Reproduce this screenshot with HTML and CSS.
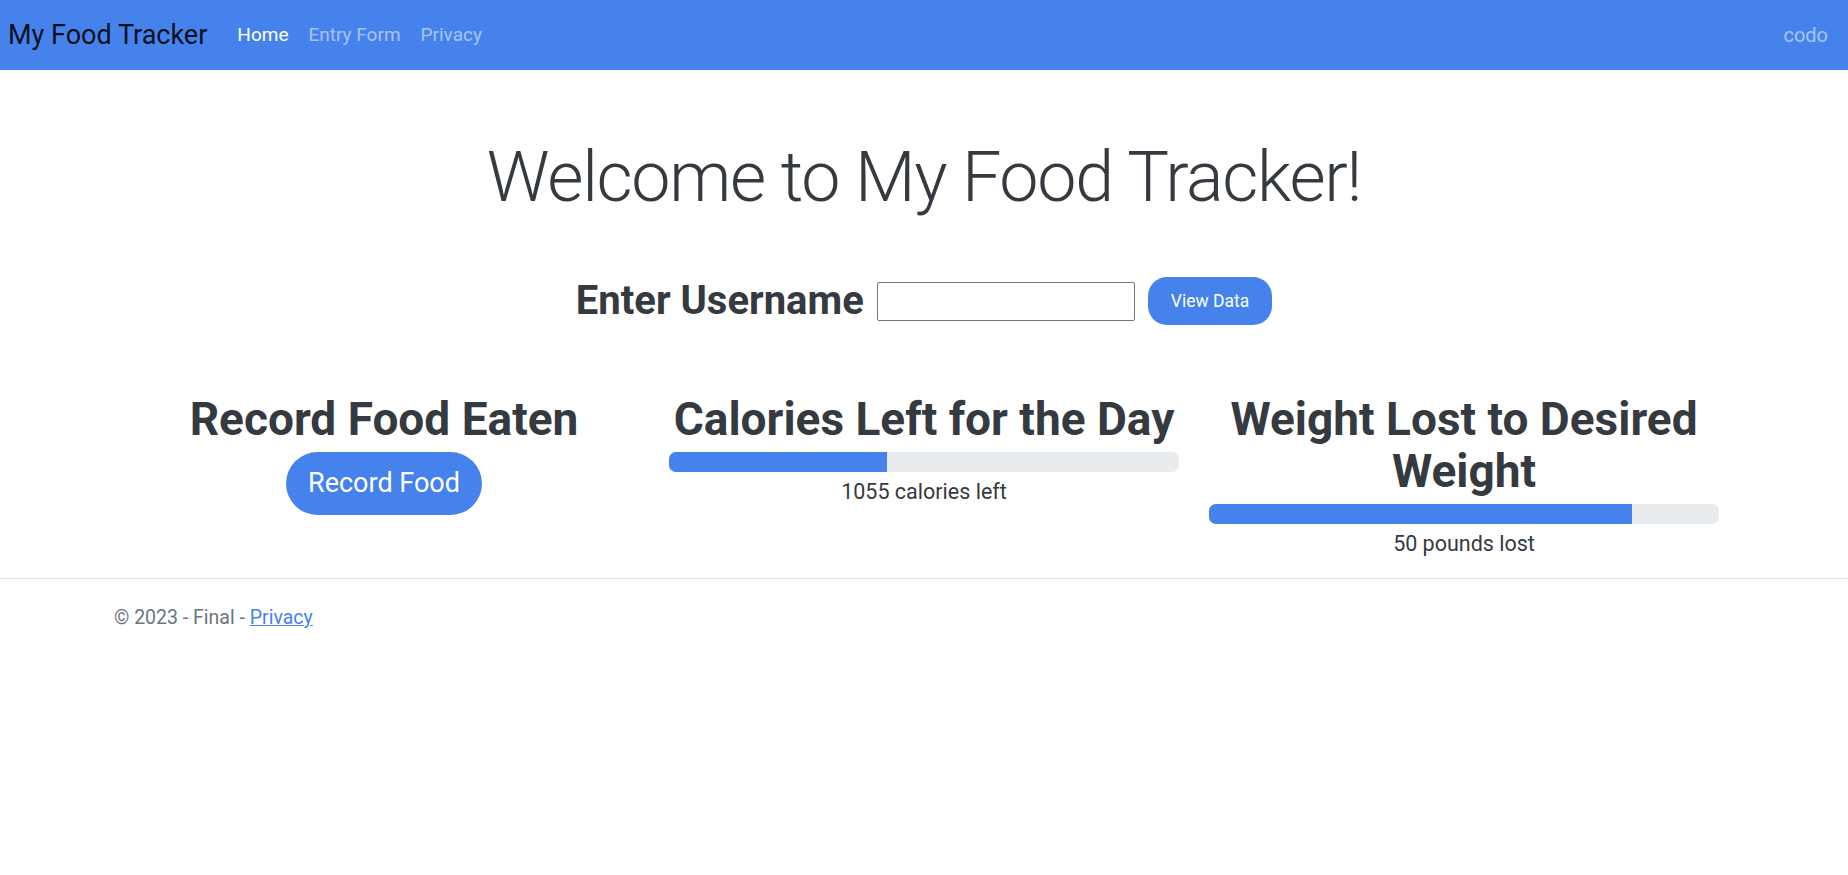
FILE: index.html
```html
<!DOCTYPE html>
<html lang="en">
<head>
<meta charset="utf-8">
<title>My Food Tracker</title>
<link rel="stylesheet" href="styles.css">
</head>
<body>
<header class="navbar">
  <a class="brand" href="#">My Food Tracker</a>
  <nav class="nav-links">
    <a class="nav-link active" href="#">Home</a>
    <a class="nav-link" href="#">Entry Form</a>
    <a class="nav-link" href="#">Privacy</a>
  </nav>
  <span class="user">codo</span>
</header>

<main class="container">
  <h1 class="display">Welcome to My Food Tracker!</h1>

  <form class="lookup">
    <label class="lookup-label" for="username">Enter Username</label>
    <input class="lookup-input" id="username" type="text">
    <button class="btn btn-sm" type="button">View Data</button>
  </form>

  <section class="cards">
    <div class="card">
      <h2 class="card-title">Record Food Eaten</h2>
      <a class="btn btn-lg" href="#">Record Food</a>
    </div>
    <div class="card">
      <h2 class="card-title">Calories Left for the Day</h2>
      <div class="progress"><div class="progress-bar" style="width:42.8%"></div></div>
      <p class="progress-text">1055 calories left</p>
    </div>
    <div class="card">
      <h2 class="card-title">Weight Lost to Desired Weight</h2>
      <div class="progress"><div class="progress-bar" style="width:82.9%"></div></div>
      <p class="progress-text">50 pounds lost</p>
    </div>
  </section>
</main>

<footer class="footer">
  <div class="container">© 2023 - Final - <a class="footer-link" href="#">Privacy</a></div>
</footer>
</body>
</html>
```

FILE: styles.css
```css
* { box-sizing: border-box; }

html, body {
  margin: 0;
  padding: 0;
}

body {
  font-family: Roboto, "Noto Sans", sans-serif;
  font-size: 20px;
  line-height: 1.5;
  color: #343a40;
  background: #fff;
}

/* ---------- navbar ---------- */
.navbar {
  height: 70px;
  background: #4582ec;
  display: flex;
  align-items: center;
  padding: 0 20px 0 8px;
}

.brand {
  font-size: 27px;
  color: rgba(0, 0, 0, 0.9);
  text-decoration: none;
  margin-right: 20px;
  line-height: 1.5;
}

.nav-links {
  display: flex;
  flex: 1;
}

.nav-link {
  padding: 10px;
  font-size: 19px;
  color: rgba(255, 255, 255, 0.55);
  text-decoration: none;
}

.nav-link.active {
  color: #fff;
}

.user {
  font-size: 20px;
  color: rgba(255, 255, 255, 0.55);
}

/* ---------- main ---------- */
.container {
  max-width: 1650px;
  margin: 0 auto;
  padding: 0 15px;
}

.display {
  margin: 65px 0 0;
  font-size: 70px;
  font-weight: 300;
  line-height: 1.2;
  letter-spacing: -1.3px;
  text-align: center;
  color: #343a40;
}

.lookup {
  margin-top: 58px;
  display: flex;
  justify-content: center;
  align-items: center;
  gap: 13px;
}

.lookup-label {
  font-size: 40px;
  font-weight: 700;
  line-height: 1.2;
}

.lookup-input {
  width: 258px;
  height: 39px;
  border: 1px solid #767676;
  border-radius: 2px;
  font: inherit;
  padding: 0 4px;
}

.btn {
  display: inline-block;
  background: #4582ec;
  color: #fff;
  border: 0;
  text-decoration: none;
  font-family: inherit;
  cursor: pointer;
}

.btn-sm {
  height: 48px;
  padding: 0 23px;
  font-size: 17.5px;
  border-radius: 19px;
}

.btn-lg {
  height: 63px;
  padding: 0 22px;
  font-size: 27px;
  line-height: 63px;
  border-radius: 32px;
}

/* ---------- cards ---------- */
.cards {
  margin-top: 68px;
  display: grid;
  grid-template-columns: repeat(3, 1fr);
  padding-bottom: 19px;
}

.card {
  padding: 0 15px;
  text-align: center;
}

.card-title {
  margin: 0 0 7px;
  font-size: 46px;
  font-weight: 700;
  line-height: 52px;
}

.progress {
  height: 20px;
  background: #e9ecef;
  border-radius: 7px;
  overflow: hidden;
}

.progress-bar {
  height: 100%;
  background: #4582ec;
}

.progress-text {
  margin: 5px 0 0;
  font-size: 21.5px;
  line-height: 30px;
}

/* ---------- footer ---------- */
.footer {
  border-top: 1px solid #dee2e6;
  padding-top: 9px;
  line-height: 60px;
  font-size: 19.5px;
  color: #6c757d;
}

.footer-link {
  color: #4582ec;
}
```
